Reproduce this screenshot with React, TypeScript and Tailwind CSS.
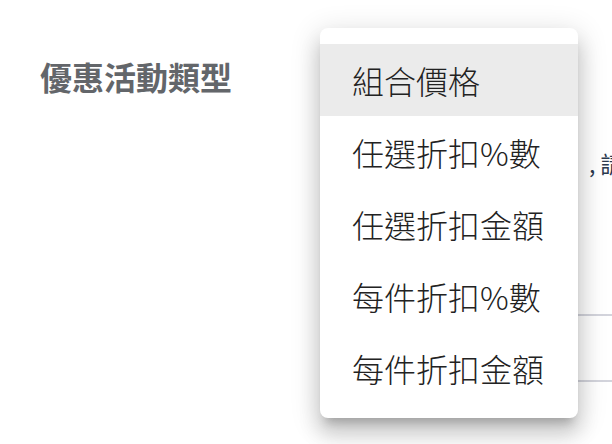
const options = ['組合價格', '任選折扣%數', '任選折扣金額', '每件折扣%數', '每件折扣金額'];

export default function App() {
  return (
    <div
      className="relative w-[612px] h-[444px] overflow-hidden bg-white"
      style={{ fontFamily: '"Noto Sans CJK TC", "Noto Sans", sans-serif' }}
    >
      {/* form underneath */}
      <div className="flex pt-[54px] pl-10">
        <div className="w-[280px] shrink-0 text-[32px] leading-[44px] font-bold text-[#63666a]">
          優惠活動類型
        </div>
        <div className="flex-1 flex flex-col overflow-hidden">
          <div className="h-[44px]" />
          <div className="mt-[51px] pl-[269px] whitespace-nowrap text-[23px] leading-[28px] tracking-[5px] text-[#2c3a4f]">
            ,請設定
          </div>
          <div className="mt-[137px] h-[2px] bg-[#d3d4dc]" />
          <div className="mt-[64px] h-[2px] bg-[#d3d4dc]" />
        </div>
      </div>

      {/* dropdown menu */}
      <div className="absolute left-[320px] top-[28px] w-[258px] rounded-lg bg-white pt-4 pb-[14px] shadow-[0_10px_10px_-6px_rgba(0,0,0,0.2),0_16px_20px_2px_rgba(0,0,0,0.14),0_6px_28px_4px_rgba(0,0,0,0.12)]">
        {options.map((o, i) => (
          <div
            key={o}
            className={`h-[72px] flex items-center px-8 text-[32px] font-light text-[#222] ${i === 0 ? 'bg-[#ebebeb]' : ''}`}
          >
            {o}
          </div>
        ))}
      </div>
    </div>
  );
}
